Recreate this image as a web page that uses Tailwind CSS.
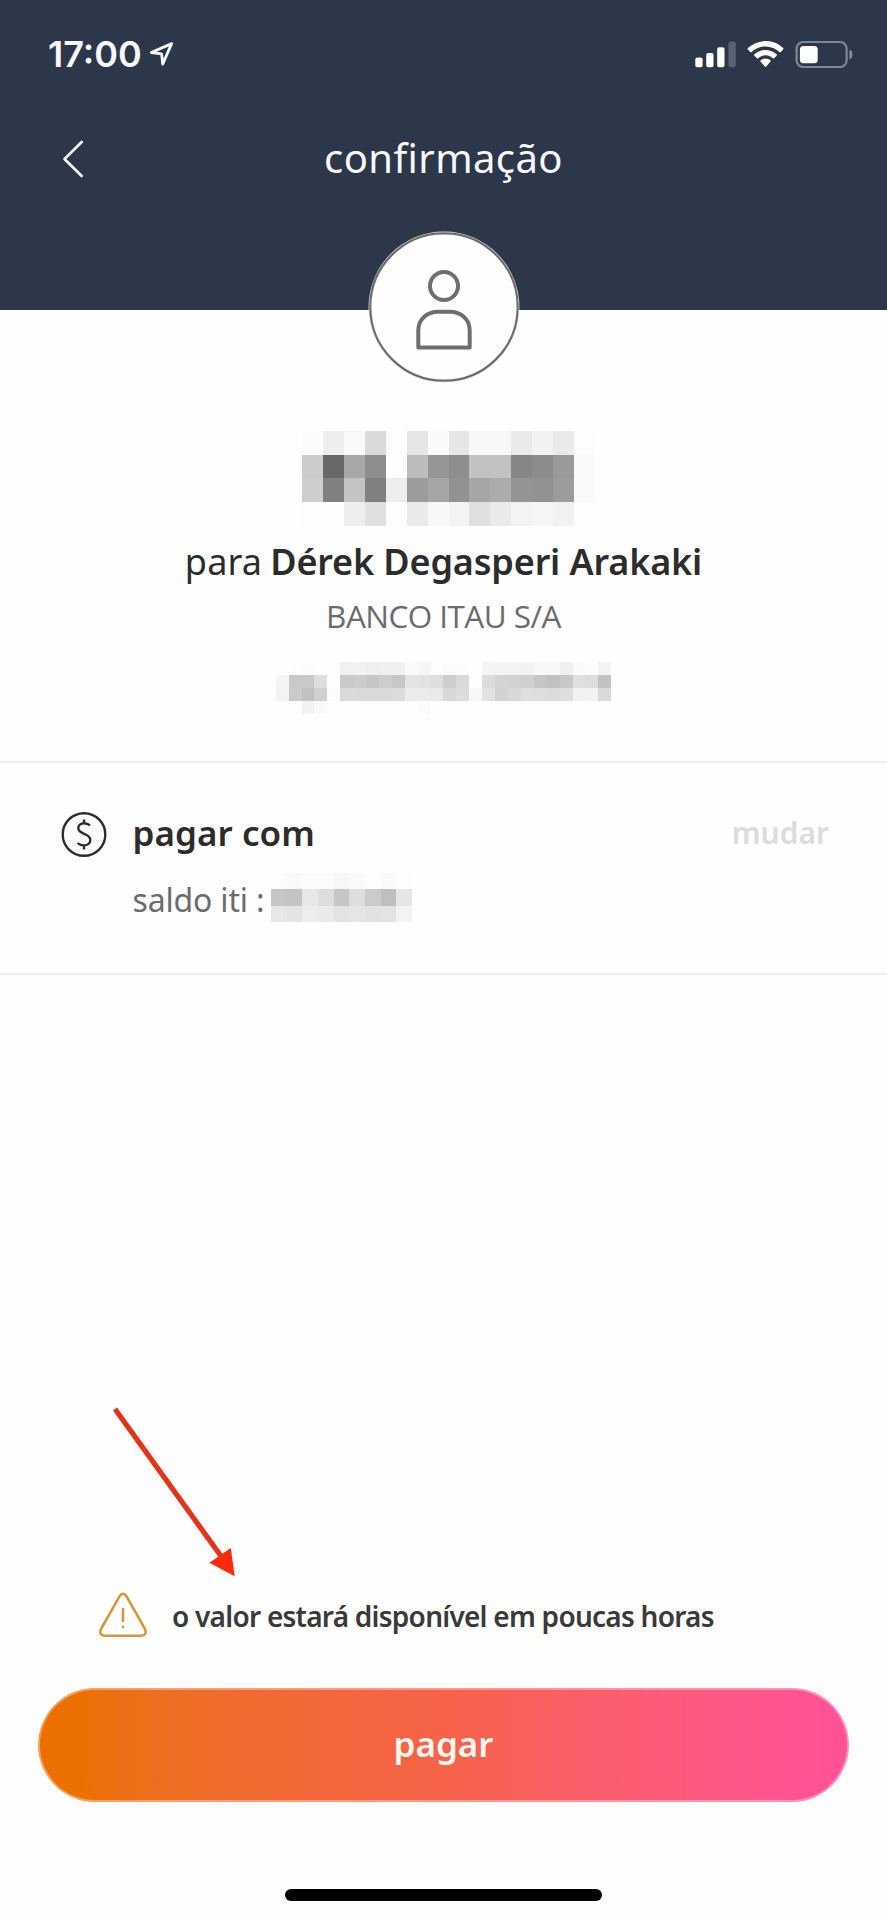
<!DOCTYPE html>
<html lang="pt-BR">
<head>
<meta charset="utf-8">
<title>confirmação</title>
<script src="https://cdn.jsdelivr.net/npm/@tailwindcss/browser@4"></script>
</head>
<body class="bg-[#fefefe]">
<div class="relative flex h-[1920px] w-[887px] flex-col overflow-hidden bg-[#fefefe] font-['Noto_Sans',sans-serif] text-[#2c2c2c]">

  <header class="flex h-[309.5px] shrink-0 flex-col bg-[#2d374a] pt-[34px] text-[#f7f8fd]">
    <!-- status bar -->
    <div class="flex h-10 items-center justify-between pr-[33px] pl-12">
      <div class="flex items-center gap-[7px]">
        <span class="font-['Inter',sans-serif] text-[36px] leading-10 font-semibold">17:00</span>
        <svg class="h-[28px] w-[26px]" viewBox="0 0 26 28" fill="none" stroke="currentColor" stroke-width="2.8" stroke-linejoin="round"><path d="M22.6 3.6 2.3 12.5 12.6 13.8 13.7 24.2Z"/></svg>
      </div>
      <div class="flex items-center">
        <svg class="h-[28px] w-[42px]" viewBox="0 0 42 28" fill="#fff"><rect x="0.3" y="17.5" width="7.3" height="9.7" rx="2"/><rect x="11.2" y="13" width="7.3" height="14.2" rx="2"/><rect x="22.2" y="7.3" width="7.3" height="19.9" rx="2"/><rect x="33.5" y="1.6" width="7.3" height="25.6" rx="2" opacity=".22"/></svg>
        <svg class="ml-[10px] h-[28px] w-[37px]" viewBox="0 0 37 28" fill="#fff"><path d="M18.5 1.1C11.7 1.1 5.500 3.700.9 8.100q-.7.7 0 1.400l2.400 2.400q.6.6 1.300 0C8.200 8.500 13.100 6.400 18.500 6.400s10.300 2.100 13.900 5.500q.7.6 1.300 0l2.400-2.400q.7-.7 0-1.400C31.500 3.700 25.300 1.100 18.500 1.100Z"/><path d="M18.500 9.900c-4.300 0-8.200 1.700-11.100 4.400q-.7.7 0 1.400l2.500 2.500q.6.6 1.300 0c1.900-1.800 4.500-2.900 7.300-2.900s5.400 1.100 7.300 2.900q.7.6 1.300 0l2.500-2.500q.7-.7 0-1.400C26.700 11.600 22.800 9.900 18.500 9.900Z"/><path d="M18.500 18.600c-1.900 0-3.600.7-4.900 1.800q-.7.7 0 1.400l4.200 4.700q.7.7 1.400 0l4.200-4.700q.7-.7 0-1.400c-1.300-1.100-3-1.800-4.900-1.800Z"/></svg>
        <svg class="ml-[11px] h-[28px] w-[59px]" viewBox="0 0 59 28"><rect x="1.600" y="2" width="50" height="25" rx="6.500" fill="none" stroke="#7f8795" stroke-width="2.200"/><rect x="4.900" y="5.900" width="17.800" height="17.400" rx="3.500" fill="#fff"/><path d="M54.500 9.500c1.800.8 2.900 2.800 2.900 5s-1.100 4.200-2.900 5Z" fill="#8b92a0"/></svg>
      </div>
    </div>
    <!-- title bar -->
    <div class="mt-[53px] grid h-[60px] grid-cols-[1fr_auto_1fr] items-center">
      <svg class="ml-[61px] h-[40px] w-[26px]" viewBox="0 0 26 40" fill="none" stroke="currentColor" stroke-width="2.600" stroke-linecap="round" stroke-linejoin="round"><path d="M20.700 4 3.500 21 20.700 38"/></svg>
      <h1 class="pt-px text-[40px] leading-[60px] font-normal tracking-[0.4px]">confirmação</h1>
      <span></span>
    </div>
  </header>

  <main class="flex grow flex-col">
    <section class="flex flex-col items-center">
      <svg class="-mt-[79px] h-[152px] w-[152px] shrink-0" viewBox="0 0 152 152" fill="none" stroke="#6e6e6e">
        <circle cx="76" cy="76" r="75.400" fill="#e4e5e7" stroke="none"/>
        <circle cx="76" cy="76" r="73.700" fill="#fefefe" stroke-width="2.200"/>
        <g stroke-width="4" stroke-linejoin="round"><circle cx="76" cy="55" r="14"/><path d="M50.300 116.500V99.500C50.300 88 59.500 80.800 70 80.800H82C92.500 80.800 101.700 88 101.700 99.500V116.500Z"/></g>
      </svg>

      <div id="amount" class="mt-[48.500px] grid h-[94.600px] w-[293px] translate-x-[5px] grid-cols-14 grid-rows-4"></div>

      <p class="mt-[11px] flex gap-2 text-[36px] leading-[50px]"><span class="tracking-[0.17px]">para</span><b class="font-semibold tracking-[-0.14px]">Dérek Degasperi Arakaki</b></p>
      <p class="mt-[9.500px] font-['Open_Sans','Noto_Sans',sans-serif] text-[31.5px] leading-10 tracking-[-0.55px] text-[#6c6c6c]">BANCO ITAU S/A</p>

      <div id="account" class="mt-[26px] grid h-[52.400px] w-[335.600px] grid-cols-26 grid-rows-4"></div>
    </section>

    <section class="mt-[46.500px] flex h-[214px] shrink-0 gap-[26px] border-y-2 border-[#f0f0f0] pt-[45.500px] pr-[58px] pl-[60.500px]">
      <svg class="mt-[2.500px] h-[46px] w-[46px]" viewBox="0 0 46 46" fill="none" stroke="#2c2c2c" stroke-width="2.400"><circle cx="23" cy="23.500" r="21.300"/><path d="M29 14.500C27.500 13 25.500 12.300 23 12.300c-3.400 0-5.700 2-5.700 5 0 6.500 12 4.500 12 11.500 0 3.500-2.700 5.600-6.300 5.600-2.700 0-4.800-.8-6.400-2.400M23 8.500v4M23 34v4.500" stroke-width="2.400"/></svg>
      <div class="grow">
        <h2 class="text-[35px] leading-[50px] font-semibold tracking-[0.07px]">pagar com</h2>
        <div class="mt-[22px] flex h-10 items-center text-[#6c6c6c]">
          <span class="text-[32px] leading-10 tracking-[-0.18px]">saldo iti :</span>
          <div id="balance" class="-mt-[6px] ml-[6.500px] grid h-[48.400px] w-[141px] grid-cols-9 grid-rows-3"></div>
        </div>
      </div>
      <span class="text-[30px] leading-[50px] font-semibold text-[#dcdcdc]">mudar</span>
    </section>

    <footer class="mt-auto flex flex-col items-center">
      <div class="flex h-[52px] items-center gap-[24px] self-start pl-[98px]">
        <svg class="h-[50px] w-[50px]" viewBox="0 0 50 50" fill="none" stroke="#d39a3a" stroke-width="2.600" stroke-linejoin="round" stroke-linecap="round"><path d="M21.500 5.300Q25 .3 28.500 5.300L47 38Q49.500 44.500 43 44.800H7Q.5 44.500 3 38Z"/><path d="M25 18V30M25 35.800v.2" stroke-width="2.600"/></svg>
        <p class="text-[28px] leading-[52px] font-semibold tracking-[-0.75px] text-[#3a3a3a]">o valor estará disponível em poucas horas</p>
      </div>
      <button class="mt-[46px] h-[114px] w-[811px] rounded-full border-2 border-white/35 bg-linear-to-r from-[#ec7000] from-5% via-[#f66248] to-[#ff5296] to-97% bg-origin-border text-[35px] font-semibold text-[#fff6ee]">pagar</button>
      <div class="mt-[87.500px] mb-[19px] h-3 w-[317px] rounded-full bg-black"></div>
    </footer>
  </main>

  <!-- annotation arrow lying over the screen -->
  <svg class="absolute top-[1400px] left-[105px] h-[185px] w-[140px]" viewBox="0 0 140 185"><path d="M10 9 117 157.500" stroke="#e63318" stroke-width="5.200"/><path d="M129.700 176.300 125.800 148 104.300 162.700Z" fill="#fb2a0c"/></svg>
</div>

<script>
// Grey levels of the pixelated (censored) values, two hex digits per cell.
const mosaics = {
  amount: ['fceef9dafee6fae6f8f8eaf2eafd', 'cc68a88efebc968ec2c2868c9afa', 'ce80c480ee9ca692a6ac94929cf9', 'fdfdeee0fdeaf8f4e0eaf3f6f2fe'],
  account: ['fefdfcfdfdf1f2eff0f0f9f6fdfcfcfef5f3f3f2f8f8effafdf3', 'f4c9c9defec9ccc6cdc7e3e2ddcddafedcd4d2d0c6c1c8e0ddc2', 'f3cac1d0fcdad9d9d9dbebebead8dcf8e2d2d8dfdddbdef1f3da', 'fefef2fafefefefefefefefbfefefefefefefefefefefefefefe'],
  balance: ['fdf9fbfbf7f9fdfafd', 'c6c4e8dec6decbbfe6', 'e7e4edeae3e5e2e3f3']
};
for (const [id, rows] of Object.entries(mosaics)) {
  const box = document.getElementById(id);
  for (const v of rows.join('').match(/../g)) {
    const cell = document.createElement('div');
    cell.style.background = '#' + v + v + v;
    box.append(cell);
  }
}
</script>
</body>
</html>
